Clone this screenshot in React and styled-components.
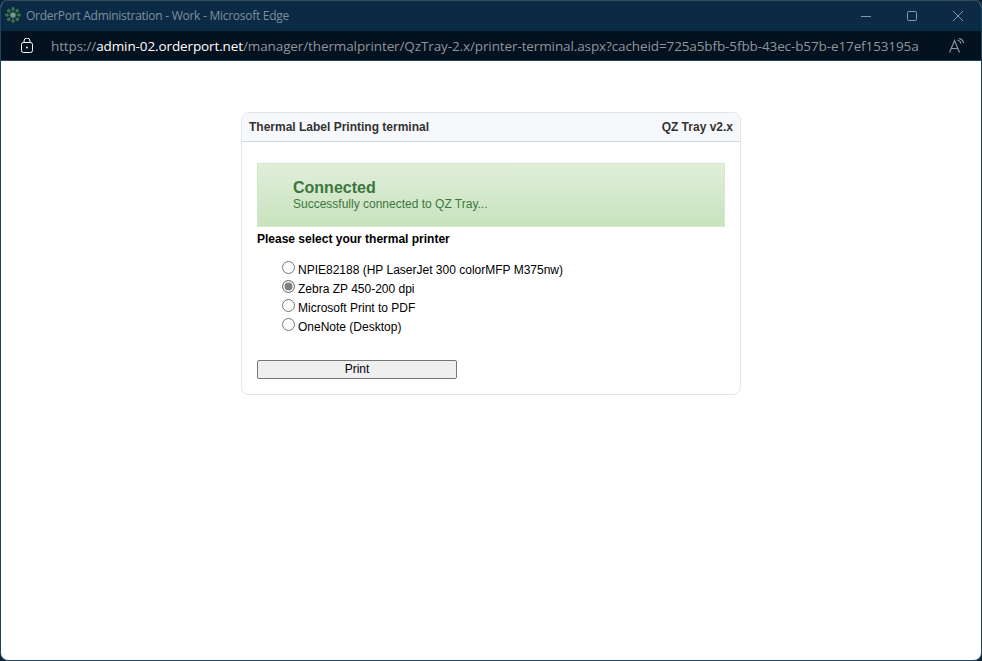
import React from 'react';
import styled, { createGlobalStyle } from 'styled-components';

const printers = [
  'NPIE82188 (HP LaserJet 300 colorMFP M375nw)',
  'Zebra ZP 450-200 dpi',
  'Microsoft Print to PDF',
  'OneNote (Desktop)',
];

const GlobalStyle = createGlobalStyle`
  html, body {
    margin: 0;
    padding: 0;
    background: #0d2438;
  }
  * {
    box-sizing: border-box;
  }
`;

const Window = styled.div`
  width: 982px;
  height: 661px;
  display: flex;
  flex-direction: column;
  overflow: hidden;
  background: #fff;
  border-radius: 8px;
  border-left: 1px solid #1e4660;
  border-right: 1px solid #1e4660;
  border-bottom: 1px solid #1e4660;
`;

const TitleBar = styled.div`
  height: 31px;
  flex: none;
  display: flex;
  align-items: center;
  padding: 0 0 2px 4px;
  background: #0b2a45;
  border-top: 1px solid #33495c;
`;

const AppTitle = styled.span`
  margin-left: 5px;
  font: 12px "Open Sans", sans-serif;
  letter-spacing: -0.27px;
  color: #7f8f9d;
  flex: 1;
`;

const WindowButton = styled.div`
  width: 46px;
  height: 24px;
  margin-top: 2px;
  display: flex;
  align-items: center;
  justify-content: center;
  color: #8497a6;
`;

const AddressBar = styled.div`
  height: 30px;
  flex: none;
  display: flex;
  align-items: center;
  padding-left: 20px;
  background: #04111e;
  border-bottom: 1px solid #1e4660;
`;

const Url = styled.div`
  margin-left: 18px;
  font: 13.5px "Open Sans", sans-serif;
  letter-spacing: -0.11px;
  color: #8e969c;
  white-space: nowrap;
  overflow: hidden;
  flex: 1;
  span {
    color: #fff;
  }
`;

const ReadAloud = styled.div`
  flex: none;
  width: 42px;
  padding-left: 10px;
  color: #8f979d;
  display: flex;
`;

const Page = styled.div`
  flex: 1;
  padding: 51px 0 0 240px;
  font-family: "Liberation Sans", Arial, sans-serif;
`;

const Card = styled.div`
  width: 500px;
  height: 283px;
  border: 1px solid #e3e5ea;
  border-radius: 8px;
  overflow: hidden;
`;

const CardHeader = styled.div`
  height: 29px;
  display: flex;
  align-items: center;
  justify-content: space-between;
  padding: 0 7px;
  background: #f7f8fb;
  border-bottom: 1px solid #d5d8e2;
  font-size: 12px;
  font-weight: bold;
  color: #333;
`;

const CardBody = styled.div`
  padding: 21px 15px 0;
`;

const Status = styled.div`
  height: 64px;
  padding: 15px 0 0 35px;
  background: linear-gradient(#e0eeda, #c8e3bd);
  border: 1px solid #d4e8cb;
  color: #3c763d;
`;

const StatusTitle = styled.div`
  font-size: 16px;
  font-weight: bold;
  line-height: 18px;
`;

const StatusText = styled.div`
  font-size: 12px;
  line-height: 14px;
`;

const SectionLabel = styled.div`
  margin-top: 5px;
  font-size: 12px;
  line-height: 14px;
  font-weight: bold;
  color: #000;
`;

const PrinterList = styled.div`
  margin: 17px 0 0 25px;
  display: flex;
  flex-direction: column;
  gap: 6px;
`;

const PrinterRow = styled.label`
  height: 13px;
  display: flex;
  align-items: center;
  gap: 3px;
  font-size: 12px;
  color: #000;
`;

const Radio = styled.input`
  appearance: none;
  width: 13px;
  height: 13px;
  margin: -4px 0 0;
  flex: none;
  border: 1px solid #767676;
  border-radius: 50%;
  background: #fff;
  &:checked {
    box-shadow: inset 0 0 0 1.5px #fff;
    background: #808080;
  }
`;

const PrintButton = styled.button`
  display: block;
  width: 200px;
  height: 19px;
  margin-top: 27px;
  padding: 0 0 2px;
  background: #efefef;
  border: 1px solid #767676;
  border-radius: 2px;
  font: 12px "Liberation Sans", Arial, sans-serif;
  color: #000;
`;

function AppLogo() {
  const spokes = [0, 45, 90, 135, 180, 225, 270, 315];
  return (
    <svg width="16" height="16" viewBox="0 0 16 16" style={{ flex: 'none' }}>
      <g fill="#3a7448">
        {spokes.map((a) => (
          <circle key={a} cx="8" cy="1.9" r="1.8" transform={`rotate(${a} 8 8)`} />
        ))}
        {spokes.map((a) => (
          <rect key={a} x="7.6" y="3" width=".8" height="3" transform={`rotate(${a} 8 8)`} />
        ))}
      </g>
      <circle cx="8" cy="8" r="2.6" fill="#7c9a90" />
    </svg>
  );
}

export default function App() {
  return (
    <Window>
      <GlobalStyle />
      <TitleBar>
        <AppLogo />
        <AppTitle>OrderPort Administration - Work - Microsoft Edge</AppTitle>
        <WindowButton>
          <svg width="10" height="10" viewBox="0 0 10 10"><path d="M0 5.5h10" stroke="currentColor" fill="none" /></svg>
        </WindowButton>
        <WindowButton>
          <svg width="10" height="10" viewBox="0 0 10 10"><rect x=".5" y=".5" width="9" height="9" rx="1" stroke="currentColor" fill="none" /></svg>
        </WindowButton>
        <WindowButton>
          <svg width="10" height="10" viewBox="0 0 10 10"><path d="M0 0l10 10M10 0L0 10" stroke="currentColor" fill="none" /></svg>
        </WindowButton>
      </TitleBar>
      <AddressBar>
        <svg width="12" height="15" viewBox="0 0 12 15" fill="none" stroke="#fff" style={{ flex: 'none' }}>
          <rect x=".5" y="4.5" width="11" height="10" rx="2" />
          <path d="M3 4.5V3a3 3 0 0 1 6 0v1.5" />
          <circle cx="6" cy="9.5" r=".9" fill="#fff" stroke="none" />
        </svg>
        <Url>https://<span>admin-02.orderport.net</span>/manager/thermalprinter/QzTray-2.x/printer-terminal.aspx?cacheid=725a5bfb-5fbb-43ec-b57b-e17ef153195a</Url>
        <ReadAloud>
          <svg width="17" height="16" viewBox="0 0 17 16" fill="none" stroke="currentColor" strokeWidth="1.2">
            <path d="M0.5 14.5L5.5 2.5 10.5 14.5M2.3 10.5h6.4" />
            <path d="M8.5 2c1.8.5 3 1.6 3.5 3.5" />
            <path d="M10 0.3c2.4.6 4.2 2.4 4.8 4.8" />
          </svg>
        </ReadAloud>
      </AddressBar>
      <Page>
        <Card>
          <CardHeader>
            <span>Thermal Label Printing terminal</span>
            <span>QZ Tray v2.x</span>
          </CardHeader>
          <CardBody>
            <Status>
              <StatusTitle>Connected</StatusTitle>
              <StatusText>Successfully connected to QZ Tray...</StatusText>
            </Status>
            <SectionLabel>Please select your thermal printer</SectionLabel>
            <PrinterList>
              {printers.map((name, i) => (
                <PrinterRow key={name}>
                  <Radio type="radio" name="printer" defaultChecked={i === 1} />
                  {name}
                </PrinterRow>
              ))}
            </PrinterList>
            <PrintButton>Print</PrintButton>
          </CardBody>
        </Card>
      </Page>
    </Window>
  );
}
